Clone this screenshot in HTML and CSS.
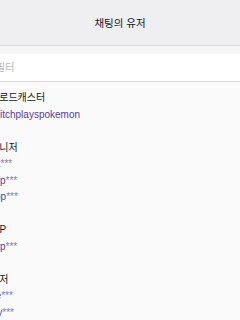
FILE: index.html
```html
<!DOCTYPE html>
<html lang="ko">
<head>
<meta charset="UTF-8">
<meta name="viewport" content="width=device-width, initial-scale=1.0">
<title>채팅의 유저</title>

<link rel="stylesheet" href="styles.css">
</head>
<body>

<header>
    <h1>채팅의 유저</h1>
</header>

<div class="filter">
    <input type="text" placeholder="필터">
</div>

<div class="list">

    <div class="group">
        <h2>브로드캐스터</h2>
        <div class="user">twitchplayspokemon</div>
    </div>

    <div class="group">
        <h2>매니저</h2>
        <div class="user">dk<span class="mask">***</span></div>
        <div class="user">xyp<span class="mask">***</span></div>
        <div class="user">kop<span class="mask">***</span></div>
    </div>

    <div class="group">
        <h2>VIP</h2>
        <div class="user">kyp<span class="mask">***</span></div>
    </div>

    <div class="group">
        <h2>유저</h2>
        <div class="user">ne<span class="mask">***</span></div>
        <div class="user">wy<span class="mask">***</span></div>
    </div>

</div>

</body>
</html>
```

FILE: styles.css
```css
*{
    margin:0;
    padding:0;
    box-sizing:border-box;
    font-family:"Liberation Sans","Noto Sans CJK KR",sans-serif;
}

body{
    background:#fafafa;
    overflow:hidden;
}

header{
    height:46px;
    background:#efeef1;
    border-bottom:1px solid #dad8de;
    display:flex;
    align-items:center;
    justify-content:center;
}

h1{
    font-size:10.5px;
    font-weight:normal;
    color:#19171c;
}

.filter{
    background:#f6f6f6;
    padding-top:8px;
    overflow:hidden;
}

.filter input{
    display:block;
    width:calc(100% + 4px);
    height:28px;
    border:none;
    border-bottom:1px solid #dcdcdc;
    background:white;
    margin-left:-4px;
    font-size:10px;
    outline:none;
}

.filter input::placeholder{
    color:#b8b8bd;
}

.list{
    padding-top:8px;
    margin-left:-10px;
}

.group{
    margin-bottom:16.5px;
}

h2{
    font-size:10px;
    font-weight:normal;
    color:#19171c;
    line-height:16.5px;
}

.user{
    font-size:10px;
    line-height:16.5px;
    color:#5b3a9c;
    white-space:nowrap;
}

.mask{
    color:#8b78bb;
}
```
